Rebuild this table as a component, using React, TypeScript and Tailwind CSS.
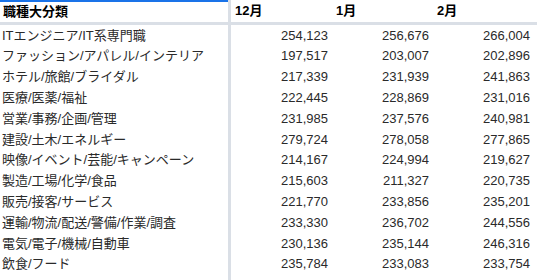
const rows: [string, string, string, string][] = [
  ['ITエンジニア/IT系専門職', '254,123', '256,676', '266,004'],
  ['ファッション/アパレル/インテリア', '197,517', '203,007', '202,896'],
  ['ホテル/旅館/ブライダル', '217,339', '231,939', '241,863'],
  ['医療/医薬/福祉', '222,445', '228,869', '231,016'],
  ['営業/事務/企画/管理', '231,985', '237,576', '240,981'],
  ['建設/土木/エネルギー', '279,724', '278,058', '277,865'],
  ['映像/イベント/芸能/キャンペーン', '214,167', '224,994', '219,627'],
  ['製造/工場/化学/食品', '215,603', '211,327', '220,735'],
  ['販売/接客/サービス', '221,770', '233,856', '235,201'],
  ['運輸/物流/配送/警備/作業/調査', '233,330', '236,702', '244,556'],
  ['電気/電子/機械/自動車', '230,136', '235,144', '246,316'],
  ['飲食/フード', '235,784', '233,083', '233,754'],
];

const months = ['12月', '1月', '2月'];

export default function App() {
  return (
    <div className="flex h-[280px] w-[537px] flex-col overflow-hidden bg-white font-['Liberation_Sans','Noto_Sans_CJK_JP',sans-serif] text-[13px] text-[#2a2a2a]">
      <div className="flex h-[25px] shrink-0 border-b-[3px] border-[#dadfe6]">
        <div className="flex w-[228px] items-center border-t-2 border-[#1a73e8] px-[3px] pb-[1px] font-bold text-black">職種大分類</div>
        <div className="w-[3px] bg-[#dadfe6]" />
        {months.map((m) => (
          <div key={m} className="flex w-[101px] items-center pl-[4px] font-bold text-black">
            {m}
          </div>
        ))}
      </div>
      {rows.map((r) => (
        <div key={r[0]} className="flex h-[20.8px] shrink-0 items-center">
          <div className="w-[228px] truncate px-[2px]">{r[0]}</div>
          <div className="w-[3px] self-stretch bg-[#dadfe6]" />
          {r.slice(1).map((v, i) => (
            <div key={i} className="w-[101px] pr-[4px] text-right">
              {v}
            </div>
          ))}
        </div>
      ))}
      <div className="flex flex-1">
        <div className="w-[228px]" />
        <div className="w-[3px] bg-[#dadfe6]" />
      </div>
    </div>
  );
}
